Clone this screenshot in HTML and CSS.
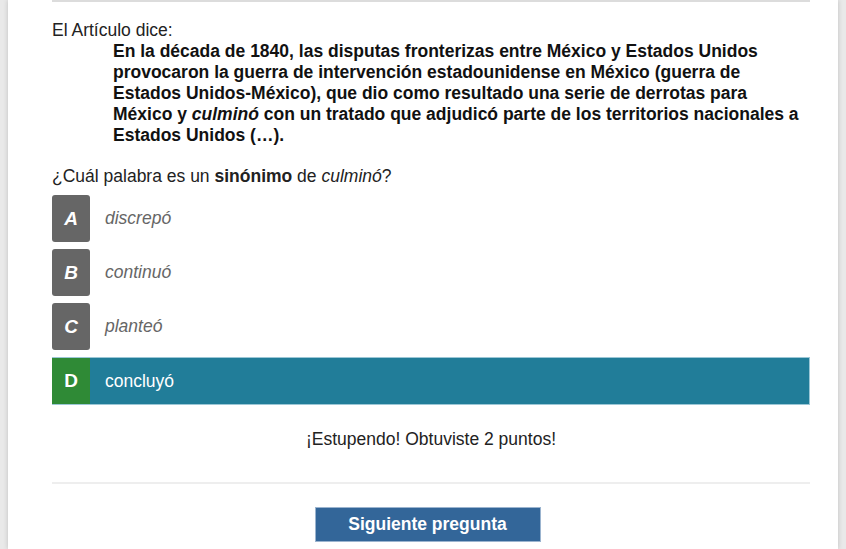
FILE: index.html
```html
<!DOCTYPE html>
<html lang="es">
<head>
<meta charset="utf-8">
<link rel="stylesheet" href="styles.css">
</head>
<body>
<div class="card">
  <div class="inner">
    <div class="topline"></div>
    <p class="intro">El Artículo dice:</p>
    <blockquote class="quote">En la década de 1840, las disputas fronterizas entre México y Estados Unidos provocaron la guerra de intervención estadounidense en México (guerra de Estados Unidos-México), que dio como resultado una serie de derrotas para México y <em>culminó</em> con un tratado que adjudicó parte de los territorios nacionales a Estados Unidos (…).</blockquote>
    <p class="question">¿Cuál palabra es un <strong>sinónimo</strong> de <em>culminó</em>?</p>
    <ul class="options">
      <li class="option"><span class="letter">A</span><span class="text">discrepó</span></li>
      <li class="option"><span class="letter">B</span><span class="text">continuó</span></li>
      <li class="option"><span class="letter">C</span><span class="text">planteó</span></li>
      <li class="option correct"><span class="letter">D</span><span class="text">concluyó</span></li>
    </ul>
    <p class="feedback">¡Estupendo! Obtuviste 2 puntos!</p>
    <hr class="divider">
    <div class="actions"><button class="next">Siguiente pregunta</button></div>
  </div>
</div>
</body>
</html>
```
FILE: styles.css
```css
html, body {
  margin: 0;
  padding: 0;
  background: #e9e9e9;
  font-family: "Liberation Sans", Arial, sans-serif;
  color: #222;
}
body {
  padding: 0 8px;
}
.card {
  background: #fff;
  min-height: 549px;
  box-shadow: 0 0 5px rgba(0,0,0,0.18);
}
.inner {
  padding: 0 28px 0 44px;
}
.topline {
  height: 2px;
  background: #dcdcdc;
}
.intro {
  margin: 18px 0 0;
  font-size: 17.5px;
  line-height: 21px;
}
.quote {
  margin: 0 0 0 61px;
  font-size: 17.5px;
  line-height: 21px;
  font-weight: bold;
  color: #111;
}
.quote em { font-style: italic; }
.question {
  margin: 20px 0 8px;
  font-size: 17.5px;
  line-height: 21px;
}
.options {
  list-style: none;
  margin: 0;
  padding: 0;
  display: flex;
  flex-direction: column;
  gap: 7px;
}
.option {
  display: flex;
  align-items: center;
  height: 47px;
}
.letter {
  width: 38px;
  height: 47px;
  display: flex;
  align-items: center;
  justify-content: center;
  background: #666;
  color: #fff;
  border-radius: 3px;
  font-weight: bold;
  font-style: italic;
  font-size: 19px;
}
.text {
  padding-left: 15px;
  font-style: italic;
  font-size: 17.5px;
  color: #666;
}
.option.correct {
  background: #217d99;
  border: 1px solid #9cc7d6;
  border-left: 0;
  height: 46px;
}
.option.correct .letter {
  background: #2f8a36;
  border-radius: 0;
  font-style: normal;
  height: 46px;
}
.option.correct .text {
  color: #fff;
  font-style: normal;
}
.feedback {
  text-align: center;
  margin: 24px 0 0;
  font-size: 17.5px;
  line-height: 21px;
}
.divider {
  border: 0;
  border-top: 2px solid #eeeeee;
  margin: 32px 0 0;
}
.actions {
  display: flex;
  justify-content: center;
  padding-top: 23px;
}
.next {
  width: 226px;
  height: 35px;
  background: #336699;
  border: 1px solid #9bb4cf;
  color: #fff;
  font-family: "Liberation Sans", Arial, sans-serif;
  font-weight: bold;
  font-size: 17.5px;
  padding: 0;
  margin-right: 7px;
}
```
